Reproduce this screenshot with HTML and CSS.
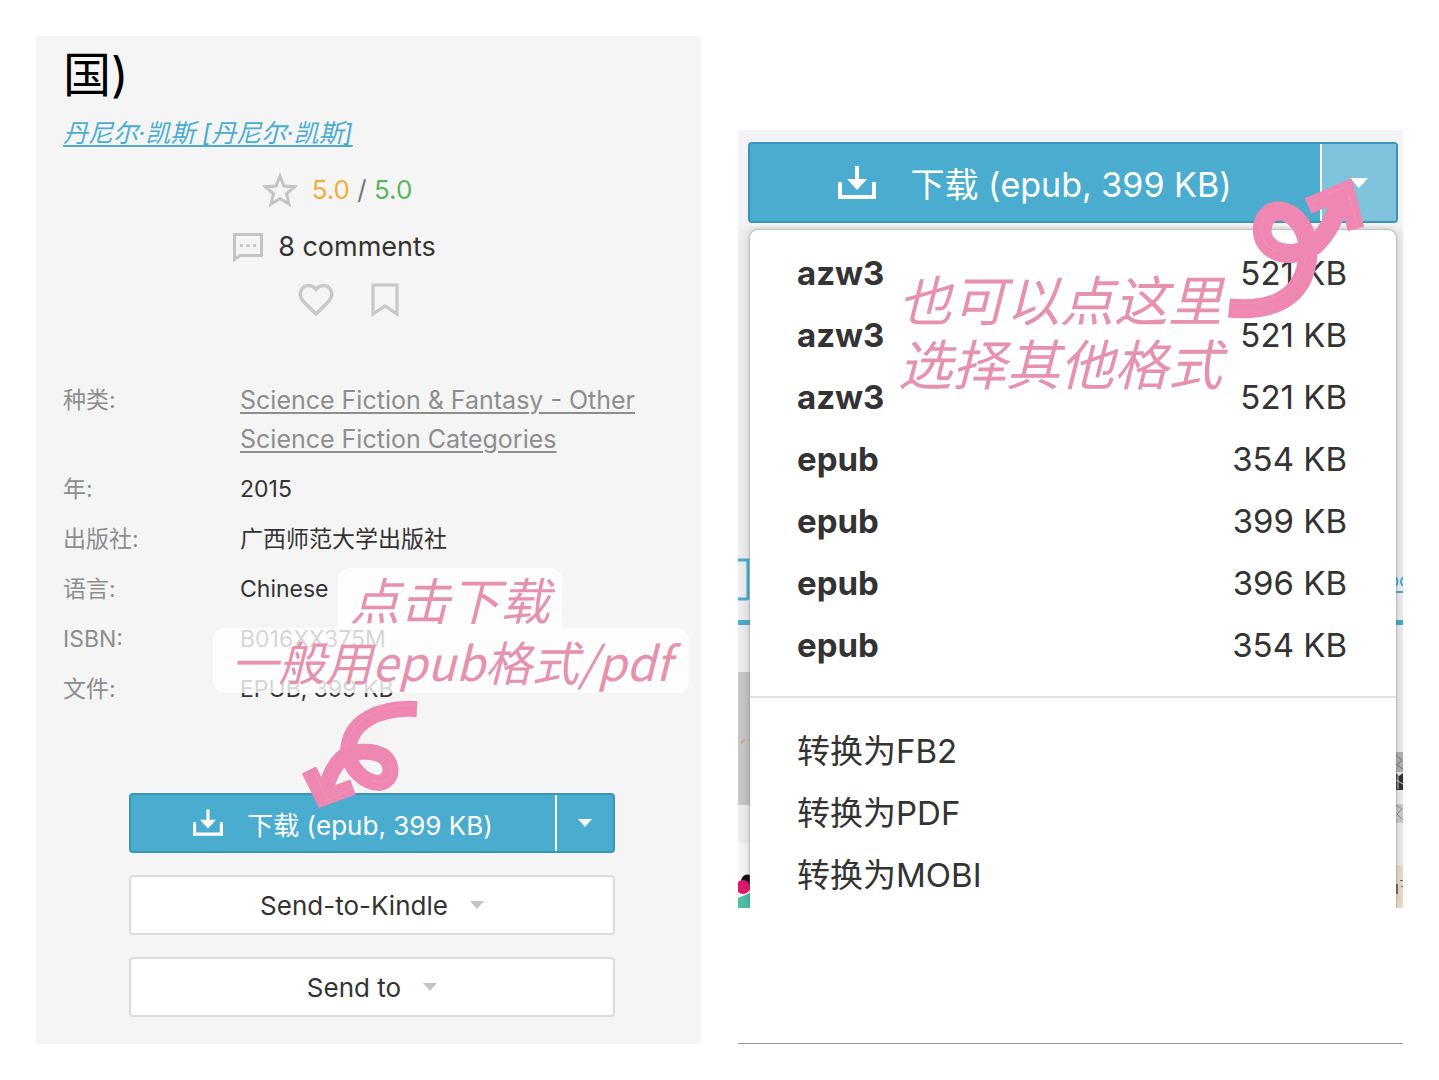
FILE: index.html
```html
<!DOCTYPE html>
<html lang="zh-CN">
<head>
  <meta charset="UTF-8" />
  <meta name="viewport" content="width=device-width, initial-scale=1.0"/>
  <title>下载 epub</title>
  <link rel="stylesheet" href="styles.css">
</head>
<body>
  <main class="page">
    <section class="book">
      <h1>国)</h1>
      <a class="author" href="#">丹尼尔·凯斯 [丹尼尔·凯斯]</a>

      <div class="stats">
        <div class="rating">
          <svg width="36" height="36" viewBox="0 0 36 36"><path d="M18 4l4 10 10.500.8-8 7 2.500 10.200-9-5.600-9 5.600 2.500-10.200-8-7L14 14z" fill="none" stroke="#c4c4c4" stroke-width="3"/></svg>
          <span><span class="score">5.0</span> / <span class="quality">5.0</span></span>
        </div>
        <div class="comments">
          <svg width="32" height="30" viewBox="0 0 32 30"><path d="M2.500 2.500h27v21H8l-5.500 4z" fill="none" stroke="#c4c4c4" stroke-width="3"/><path d="M8 12h3v3H8zm6.500 0h3v3h-3zm6.500 0h3v3h-3z" fill="#c4c4c4"/></svg>
          <span>8 comments</span>
        </div>
        <div class="actions">
          <button type="button" aria-label="Like">
            <svg width="36" height="36" viewBox="0 0 36 36"><path d="M18 32L5 19C-1 12 4 3.500 10.500 3.500c3.500 0 5.500 1.500 7.500 4 2-2.500 4-4 7.500-4C32 3.500 37 12 31 19z" fill="none" stroke="#c8c8c8" stroke-width="3.500"/></svg>
          </button>
          <button type="button" aria-label="Bookmark">
            <svg width="30" height="36" viewBox="0 0 30 36"><path d="M3 3h24v29l-12-8-12 8z" fill="none" stroke="#c8c8c8" stroke-width="3.200"/></svg>
          </button>
        </div>
      </div>

      <dl class="details">
        <dt>种类:</dt>
        <dd><a href="#">Science Fiction &amp; Fantasy - Other Science Fiction Categories</a></dd>
        <dt>年:</dt>
        <dd>2015</dd>
        <dt>出版社:</dt>
        <dd>广西师范大学出版社</dd>
        <dt>语言:</dt>
        <dd>Chinese</dd>
        <dt>ISBN:</dt>
        <dd>B016XX375M</dd>
        <dt>文件:</dt>
        <dd>EPUB, 399 KB</dd>
      </dl>

      <div class="buttons">
        <div class="split">
          <button type="button" class="download">
            <svg width="30" height="28" viewBox="0 0 38 34"><path d="M2 16v15h34V16" fill="none" stroke="#fff" stroke-width="4"/><path d="M17 0h4v13h8L19 24 9 13h8z" fill="#fff"/></svg>
            <span>下载 (epub, 399 KB)</span>
          </button>
          <button type="button" class="toggle" aria-label="More formats"><span class="caret"></span></button>
        </div>
        <button type="button" class="plain">Send-to-Kindle <span class="caret"></span></button>
        <button type="button" class="plain">Send to <span class="caret"></span></button>
      </div>

      <p class="note note-first">点击下载</p>
      <p class="note note-second">一般用epub格式/pdf</p>
      <svg class="arrow arrow-down" width="120" height="112" viewBox="300 698 120 112">
        <path d="M417 709C378 707 349 722 348 752C350 770 366 783 379 783C393 781 394 764 383 756C371 749 351 751 342 758C332 768 329 779 324 792" fill="none" stroke="#ee87b1" stroke-width="16"/>
        <path d="M309 770L323 798L353 787" fill="none" stroke="#ee87b1" stroke-width="16"/>
        <path d="M415 705C378 704 351 720 345 749M389 763C397 775 387 787 372 780M314 771L326 796M325 801L351 789" fill="none" stroke="#f194ba" stroke-width="1"/>
      </svg>
    </section>

    <section class="formats">
      <div class="shot">
        <div class="split split-large">
          <button type="button" class="download">
            <svg width="38" height="34" viewBox="0 0 38 34"><path d="M2 16v15h34V16" fill="none" stroke="#fff" stroke-width="4"/><path d="M17 0h4v13h8L19 24 9 13h8z" fill="#fff"/></svg>
            <span>下载 (epub, 399 KB)</span>
          </button>
          <button type="button" class="toggle open" aria-label="More formats" aria-expanded="true"><span class="caret"></span></button>
        </div>

        <div class="dropdown">
          <!-- slivers of the page behind the menu -->
          <svg class="edge" viewBox="0 0 12 678" preserveAspectRatio="none">
            <rect width="12" height="678" fill="#efefef"/>
            <path d="M0 330h10v38q0 1-2 1H0" fill="none" stroke="#4aadd0" stroke-width="3"/>
            <rect y="390" width="12" height="5" fill="#4aadd0"/>
            <rect y="442" width="12" height="133" fill="#c8c8c8"/>
            <path d="M2 513l3-3-1 4 3-5" fill="none" stroke="#d8a878" stroke-width="1"/>
            <rect y="613" width="12" height="65" fill="#f7f7f7"/>
            <path d="M3 650q3-7 9-5v15H6z" fill="#111"/>
            <circle cx="5" cy="657" r="7" fill="#e01a6c"/>
            <path d="M0 668l12-5v15H0z" fill="#50bfa8"/>
          </svg>
          <div class="menu">
            <ul>
              <li><a href="#"><b>azw3</b><span>521 KB</span></a></li>
              <li><a href="#"><b>azw3</b><span>521 KB</span></a></li>
              <li><a href="#"><b>azw3</b><span>521 KB</span></a></li>
              <li><a href="#"><b>epub</b><span>354 KB</span></a></li>
              <li><a href="#"><b>epub</b><span>399 KB</span></a></li>
              <li><a href="#"><b>epub</b><span>396 KB</span></a></li>
              <li><a href="#"><b>epub</b><span>354 KB</span></a></li>
            </ul>
            <ul class="convert">
              <li><a href="#">转换为FB2</a></li>
              <li><a href="#">转换为PDF</a></li>
              <li><a href="#">转换为MOBI</a></li>
            </ul>
          </div>
          <svg class="edge edge-right" viewBox="0 0 7 678" preserveAspectRatio="none">
            <rect width="7" height="678" fill="#f0f0f0"/>
            <path d="M0 347q3 4 0 9M7 347q-4 5 0 9M0 362h7" fill="none" stroke="#4aadd0" stroke-width="2"/>
            <rect y="390" width="7" height="5" fill="#4aadd0"/>
            <rect y="522" width="7" height="20" fill="#b4b4b4"/>
            <path d="M0 525l6 5-5 5 6 4M0 575l6 4-5 5 6 6" fill="none" stroke="#777" stroke-width="1"/>
            <path d="M0 543l3 3 4-3v17H0z" fill="#333"/>
            <path d="M0 550l7 4M2 545v14" stroke="#ddd" stroke-width="1"/>
            <rect y="574" width="7" height="19" fill="#aaa" opacity="0.5"/>
            <rect y="635" width="7" height="43" fill="#eadfc9"/>
            <path d="M0 654h2v10H0zm4-4h3v1H4zm1 6h2v1H5z" fill="#7a6a60"/>
          </svg>
        </div>
      </div>

      <p class="note note-other">也可以点这里<br>选择其他格式</p>
      <svg class="arrow arrow-up" width="136" height="142" viewBox="1228 178 136 142">
        <path d="M1229 308C1270 312 1304 300 1308 256C1310 228 1293 210 1277 211C1261 213 1258 235 1268 245C1281 259 1307 254 1318 242C1332 227 1334 215 1343 196" fill="none" stroke="#ee87b1" stroke-width="19"/>
        <path d="M1308 206L1346 190L1356 229" fill="none" stroke="#ee87b1" stroke-width="17"/>
        <path d="M1231 303C1268 307 1300 292 1306 256M1264 218C1257 231 1263 247 1277 251M1310 202L1344 187M1348 194L1359 228M1233 312L1262 312" fill="none" stroke="#f194ba" stroke-width="1"/>
      </svg>
    </section>
  </main>
</body>
</html>
```

FILE: styles.css
```css
:root {
  --blue: #4aadd0;
  --blue-dark: #3995b8;
  --pink: #e691ae;
  --text: #333;
  --muted: #8e8e8e;
}

* {
  margin: 0;
  padding: 0;
  box-sizing: border-box;
}

body {
  font-family: Inter, "Noto Sans CJK SC", sans-serif;
  background: #fff;
  color: var(--text);
}

button {
  font: inherit;
  color: inherit;
  background: none;
  border: none;
  cursor: pointer;
}

svg {
  display: block;
  flex: none;
}

.page {
  display: grid;
  grid-template-columns: 1fr 1fr;
  gap: 37px;
  padding: 36px;
}

.book {
  position: relative;
  background: #f5f5f5;
  padding: 9px 27px 27px;
}

.book h1 {
  font-size: 48px;
  line-height: 60px;
  font-weight: 400;
  color: #000;
}

.author {
  display: block;
  margin-top: 8px;
  font-size: 25px;
  line-height: 40px;
  font-style: italic;
  color: var(--blue);
  text-underline-offset: 3px;
}

.stats {
  margin: 8px 69px 0 0;
  font-size: 27px;
}

.rating,
.comments,
.actions {
  display: flex;
  align-items: center;
  justify-content: center;
  gap: 14px;
  height: 57px;
}

.rating {
  padding-left: 6px;
  font-size: 26px;
  color: #777;
}

.score {
  color: #f0ad3a;
}

.quality {
  color: #5cb560;
}

.actions {
  gap: 36px;
  height: 50px;
  padding-left: 29px;
}

.details {
  display: grid;
  grid-template-columns: 177px 1fr;
  row-gap: 11px;
  margin-top: 56px;
  font-size: 23px;
  line-height: 39px;
}

.details dt,
.details a {
  color: var(--muted);
}

.details a {
  display: block;
  font-size: 25px;
  text-underline-offset: 3px;
}

.buttons {
  display: flex;
  flex-direction: column;
  gap: 22px;
  margin-top: 84px;
  padding: 0 59px 0 66px;
  font-size: 26px;
}

.split {
  display: flex;
  height: 60px;
  background: var(--blue);
  border: 2px solid var(--blue-dark);
  border-radius: 4px;
  color: #fff;
}

.download {
  flex: 1;
  display: flex;
  align-items: center;
  justify-content: center;
  gap: 24px;
}

.toggle {
  display: flex;
  align-items: center;
  justify-content: center;
  width: 58px;
  border-left: 2px solid #fff;
}

.toggle.open {
  background: #7fc4dc;
}

.caret {
  display: block;
  border: 7px solid transparent;
  border-top: 8px solid currentColor;
  border-bottom: none;
}

.plain {
  display: flex;
  align-items: center;
  justify-content: center;
  gap: 22px;
  height: 60px;
  background: #fff;
  border: 2px solid #dcdcdc;
  border-radius: 4px;
}

.plain .caret {
  color: #c4c4c4;
}

.formats {
  position: relative;
  padding-top: 94px;
  border-bottom: 1px solid #999;
}

.shot {
  background: #f3f3f5;
  padding-top: 12px;
}

.split-large {
  height: 81px;
  margin: 0 5px 7px 10px;
  font-size: 34px;
}

.split-large .download {
  gap: 34px;
}

.split-large .toggle {
  width: 76px;
}

.split-large .caret {
  border-width: 10px 9px 0;
}

.dropdown {
  display: flex;
}

.edge {
  width: 12px;
  height: 678px;
}

.edge-right {
  width: 7px;
}

.menu {
  position: relative;
  flex: 1;
  background: #fff;
  border-radius: 8px 8px 0 0;
  box-shadow: 0 0 2px #777, 0 0 12px rgba(0, 0, 0, 0.2);
  clip-path: inset(-4px -12px 0);
  padding-top: 12px;
  font-size: 33px;
  line-height: 62px;
}

.menu ul {
  list-style: none;
  padding: 0 49px 0 47px;
}

.menu a {
  display: flex;
  justify-content: space-between;
  color: inherit;
  text-decoration: none;
}

.menu .convert {
  margin-top: 20px;
  padding-top: 22px;
  border-top: 2px solid #e2e2e2;
}

/* handwritten notes on top of the page */
.note {
  position: absolute;
  color: var(--pink);
  font-family: "Noto Sans CJK SC", sans-serif;
  font-style: italic;
  white-space: nowrap;
}

.note-first {
  top: 532px;
  left: 302px;
  padding: 0 12px;
  font-size: 50px;
  line-height: 60px;
  background: rgba(255, 255, 255, 0.8);
  border-radius: 12px 12px 0 0;
}

.note-second {
  top: 592px;
  left: 177px;
  padding: 0 18px;
  font-size: 47px;
  line-height: 65px;
  background: rgba(255, 255, 255, 0.8);
  border-radius: 12px;
}

.note-other {
  top: 230px;
  left: 160px;
  font-size: 54px;
  line-height: 64px;
}

.arrow {
  position: absolute;
}

.arrow-down {
  top: 662px;
  left: 264px;
}

.arrow-up {
  top: 142px;
  left: 490px;
}
```
